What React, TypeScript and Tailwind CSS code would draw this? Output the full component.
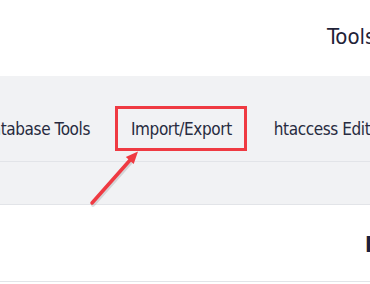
import React from "react";

const font = { fontFamily: '"DejaVu Sans Condensed", "DejaVu Sans", sans-serif' };

export default function App() {
  return (
    <div
      className="relative w-[370px] h-[284px] overflow-hidden bg-white text-[#272b40]"
      style={font}
    >
      {/* header */}
      <header className="h-[76px] pl-[327px] pt-[24px] whitespace-nowrap text-[22px] leading-[26px] text-[#1f2338]">
        Tools & Settings
      </header>

      {/* tab bar */}
      <nav className="h-[86px] bg-[#f1f2f4] border-b border-[#e2e4e8] flex items-start pt-[30px] whitespace-nowrap text-[17px] tracking-[-0.4px]">
        <div className="w-[150px] shrink-0 -ml-[40px] pr-[20px] pt-[14px] text-right leading-[19px]">
          Database Tools
        </div>
        <div className="shrink-0 ml-[5px] border-[3px] border-[#ef3a42] pl-[13px] pr-[12px] pt-[11px] pb-[9px] leading-[19px]">
          Import/Export
        </div>
        <div className="shrink-0 ml-[27px] pt-[14px] leading-[19px]">htaccess Editor</div>
      </nav>

      {/* sub bar */}
      <div className="h-[43px] bg-[#f1f2f4] border-b border-[#e2e4e8]" />

      {/* content */}
      <section className="h-[77px] border-b border-[#e2e4e8] pl-[365px] pt-[28px] whitespace-nowrap">
        <h1 className="text-[21px] font-bold leading-[24px] text-[#1b1f3b]">Import/Export</h1>
      </section>

      {/* annotation arrow */}
      <svg
        className="absolute left-0 top-0 pointer-events-none"
        width="370"
        height="284"
        viewBox="0 0 370 284"
      >
        <line x1="93" y1="205" x2="132" y2="161" stroke="rgba(0,0,0,0.12)" strokeWidth="4" strokeLinecap="round" />
        <line x1="92" y1="203" x2="131" y2="159" stroke="#ef3a42" strokeWidth="3.5" strokeLinecap="round" />
        <polygon points="138,151.5 133.7,164 125.8,157" fill="#ef3a42" />
      </svg>
    </div>
  );
}
